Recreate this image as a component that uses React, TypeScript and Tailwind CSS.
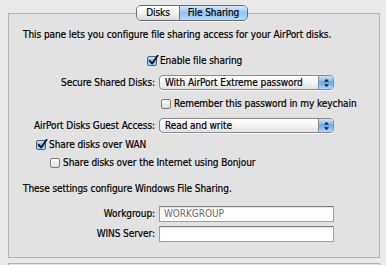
import React from "react";

function Check({ checked }: { checked?: boolean }) {
  return (
    <div
      className={
        "relative w-[10px] h-[10px] shrink-0 rounded-[2px] border " +
        (checked
          ? "border-[#4a5f80] bg-gradient-to-b from-[#d2e8fc] via-[#79b3ec] to-[#b4dafc]"
          : "border-[#7c7c7c] bg-gradient-to-b from-white to-[#dcdcdc]")
      }
    >
      {checked && (
        <svg
          className="absolute left-[0px] top-[-2px]"
          width="11"
          height="11"
          viewBox="0 0 11 11"
        >
          <path
            d="M1.8 5.8 L4.2 8.6 L9.6 0.8"
            fill="none"
            stroke="#12161e"
            strokeWidth="1.8"
            strokeLinecap="round"
            strokeLinejoin="round"
          />
        </svg>
      )}
    </div>
  );
}

function Popup({ text }: { text: string }) {
  return (
    <div className="flex h-[15px] w-[175px] overflow-hidden rounded-[4px] border border-[#8a8a8a] bg-gradient-to-b from-white via-[#f4f4f4] to-[#e2e2e2] shadow-[0_1px_0_rgba(255,255,255,0.7)]">
      <span className="flex-1 pl-[5px] text-[10px] leading-[13px] text-black">{text}</span>
      <div className="flex w-[15px] items-center justify-center border-l border-[#7d8fa6] bg-gradient-to-b from-[#cfe6fb] via-[#6eaae8] to-[#b1d8fb]">
        <svg width="7" height="10" viewBox="0 0 7 10">
          <path d="M3.5 0.8 L6 3.8 L1 3.8 Z" fill="#16243c" />
          <path d="M3.5 9.2 L6 6.2 L1 6.2 Z" fill="#16243c" />
        </svg>
      </div>
    </div>
  );
}

function Field({ text }: { text?: string }) {
  return (
    <div className="flex h-[16px] w-[175px] items-center border border-[#a0a0a0] border-t-[#7e7e7e] bg-white pl-[4px] text-[10px] text-[#6a6a6a] [-webkit-text-stroke:0px] shadow-[inset_0_1px_1px_rgba(0,0,0,0.12)]">
      {text}
    </div>
  );
}

export default function App() {
  return (
    <div className="relative h-[265px] w-[386px] overflow-hidden bg-[#e9e9e9] font-['DejaVu_Sans_Condensed','Liberation_Sans',Arial,sans-serif] text-[10px] leading-[12px] tracking-[-0.07px] text-black [-webkit-text-stroke:0.2px_#000]">
      {/* segmented tab control */}
      <div className="relative z-10 flex justify-center pt-[5px]">
        <div className="ml-[-2px] flex h-[16px] overflow-hidden rounded-[5px] border border-[#6c6c6c] shadow-[0_1px_0_rgba(255,255,255,0.6)]">
          <div className="flex w-[42px] items-center justify-center bg-gradient-to-b from-white via-[#f2f2f2] to-[#d9d9d9] leading-[14px]">
            Disks
          </div>
          <div className="flex w-[68px] items-center justify-center border-l border-[#5b7ea6] bg-gradient-to-b from-[#d3e8fb] via-[#93c5f1] to-[#b3d9fb] leading-[14px]">
            File Sharing
          </div>
        </div>
      </div>

      {/* group box */}
      <div className="ml-[8px] mt-[-8px] box-border flex h-[245px] w-[372px] flex-col border border-[#b1b1b1] bg-[#e2e2e2]">
        <div className="mt-[15px] pl-[14px] h-[12px]">
          This pane lets you configure file sharing access for your AirPort disks.
        </div>

        <div className="mt-[14px] flex h-[12px] items-center pl-[138px] gap-[3px]">
          <Check checked />
          <span>Enable file sharing</span>
        </div>

        <div className="mt-[8px] flex items-center">
          <div className="w-[147px] pr-[1px] text-right">Secure Shared Disks:</div>
          <div className="ml-[3px]">
            <Popup text="With AirPort Extreme password" />
          </div>
        </div>

        <div className="mt-[8px] flex h-[12px] items-center gap-[3px] pl-[152px]">
          <Check />
          <span>Remember this password in my keychain</span>
        </div>

        <div className="mt-[8px] flex items-center">
          <div className="w-[147px] pr-[1px] text-right">AirPort Disks Guest Access:</div>
          <div className="ml-[3px]">
            <Popup text="Read and write" />
          </div>
        </div>

        <div className="mt-[6px] flex h-[12px] items-center gap-[3px] pl-[27px]">
          <Check checked />
          <span>Share disks over WAN</span>
        </div>

        <div className="mt-[6px] flex h-[12px] items-center gap-[3px] pl-[41px]">
          <Check />
          <span>Share disks over the Internet using Bonjour</span>
        </div>

        <div className="mt-[14px] h-[12px] pl-[14px]">These settings configure Windows File Sharing.</div>

        <div className="mt-[11px] flex items-center">
          <div className="w-[147px] pr-[1px] text-right">Workgroup:</div>
          <div className="ml-[3px]">
            <Field text="WORKGROUP" />
          </div>
        </div>

        <div className="mt-[4px] flex items-center">
          <div className="w-[147px] pr-[1px] text-right">WINS Server:</div>
          <div className="ml-[3px]">
            <Field />
          </div>
        </div>
      </div>

      {/* next group box edge */}
      <div className="ml-[8px] mt-[5px] h-[10px] w-[372px] border-x border-t border-[#b1b1b1] bg-[#e2e2e2]" />
    </div>
  );
}
